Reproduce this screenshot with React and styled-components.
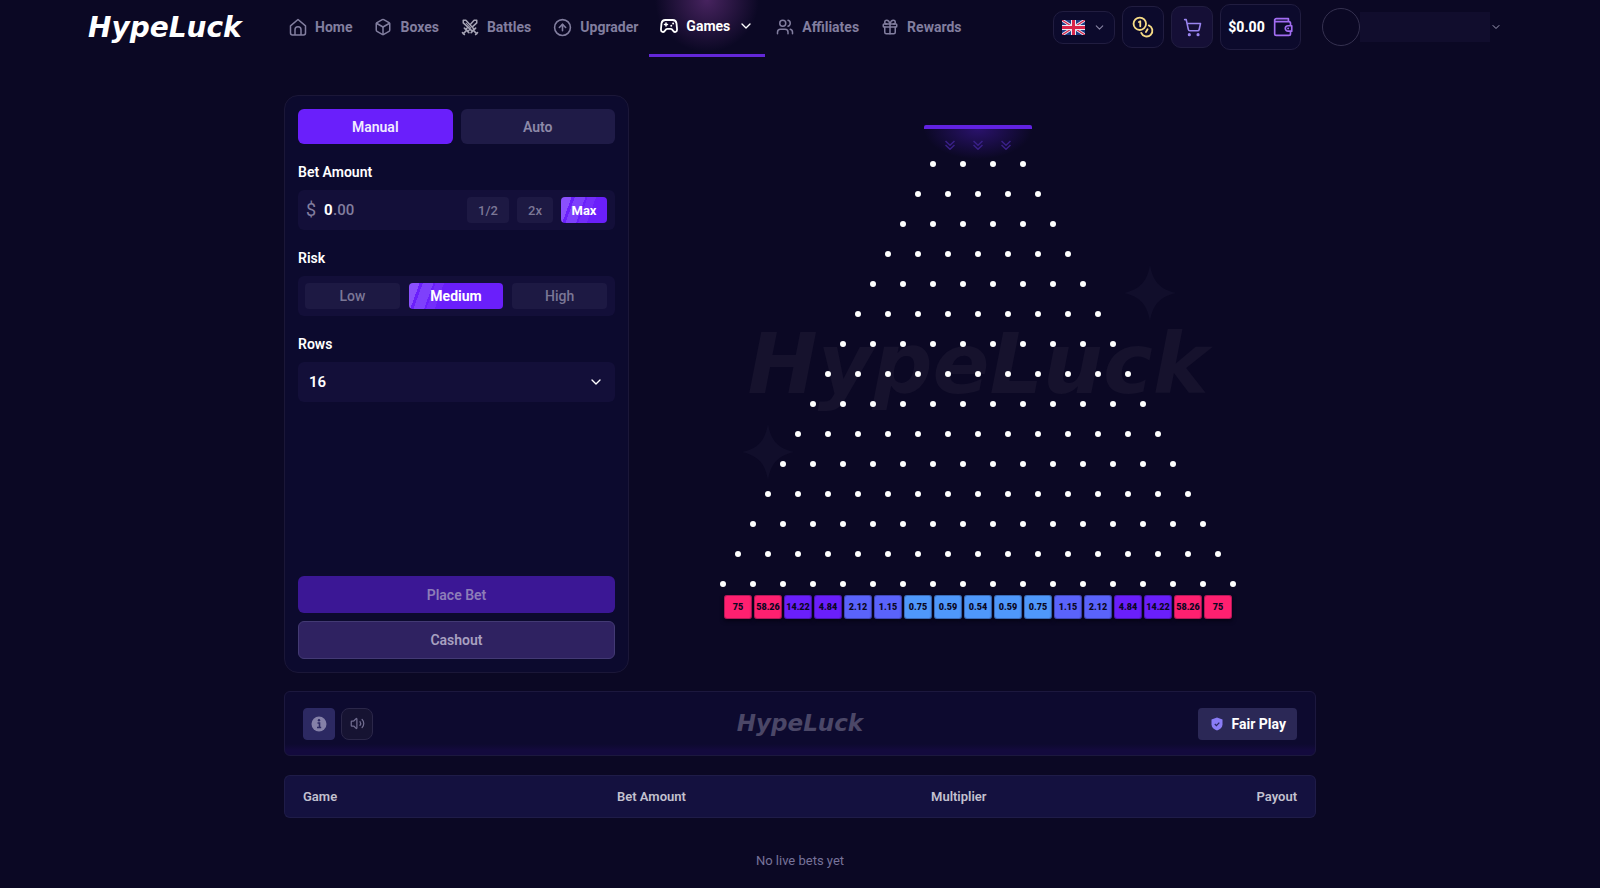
/* eslint-disable react/prop-types */
import { useState } from "react";
import styled, { createGlobalStyle, css } from "styled-components";
import {
  Box,
  ChevronDown,
  CircleArrowUp,
  Gift,
  ShoppingCart,
  Users,
  Volume2,
} from "lucide-react";

const GlobalStyle = createGlobalStyle`
  * {
    box-sizing: border-box;
  }
  body {
    margin: 0;
    min-height: 100vh;
    background-color: #0b0824;
    color: #ffffff;
    font-family: Roboto, "Noto Sans", sans-serif;
    font-size: 14px;
    line-height: 20px;
  }
  button, input, select {
    font-family: inherit;
  }
  button {
    padding: 0;
    border: none;
    cursor: pointer;
  }
`;

const ROWS = Array.from({ length: 15 }, (_, i) => i + 4);

const MULTIPLIERS = [
  { value: "75", tone: "pink" },
  { value: "58.26", tone: "pink" },
  { value: "14.22", tone: "violet" },
  { value: "4.84", tone: "violet" },
  { value: "2.12", tone: "indigo" },
  { value: "1.15", tone: "indigo" },
  { value: "0.75", tone: "blue" },
  { value: "0.59", tone: "blue" },
  { value: "0.54", tone: "blue" },
  { value: "0.59", tone: "blue" },
  { value: "0.75", tone: "blue" },
  { value: "1.15", tone: "indigo" },
  { value: "2.12", tone: "indigo" },
  { value: "4.84", tone: "violet" },
  { value: "14.22", tone: "violet" },
  { value: "58.26", tone: "pink" },
  { value: "75", tone: "pink" },
];

const TONES = {
  pink: "#ff2070",
  violet: "#6a1ffb",
  indigo: "#5a63fb",
  blue: "#4f98fb",
};

/* icons */

const HomeIcon = () => (
  <svg width="18" height="18" viewBox="0 0 24 24" fill="none" stroke="currentColor" strokeWidth="2" strokeLinejoin="round">
    <path d="M2 10.5 12 2l10 8.500V20a2.500 2.500 0 0 1-2.500 2.500h-15A2.500 2.500 0 0 1 2 20z" />
    <path d="M8 22.500v-7a4 4 0 0 1 8 0v7" />
  </svg>
);

const SwordsIcon = () => (
  <svg width="18" height="18" viewBox="0 0 24 24" fill="none" stroke="#a5a3b4" strokeLinecap="round" strokeLinejoin="round">
    <path d="M3 3h3.500l11 12-2.500 2.500L3 6.500zM21 3h-3.500L13 8M11 16l-2 1.500L6.500 15l2-2M21 3v3.500l-5.500 5" strokeWidth="2" />
    <path d="m7 7 6 6.500" strokeWidth="1.400" />
    <path d="m13.500 19.500 6-6M10.500 19.500l-6-6" strokeWidth="2.200" />
    <path d="m17.500 17.500 3.500 3.500M6.500 17.500 3 21M22 19.500 19.500 22M2 19.500 4.500 22" strokeWidth="2.200" />
  </svg>
);

const GamepadIcon = () => (
  <svg width="18" height="18" viewBox="0 0 24 24" fill="none" stroke="currentColor" strokeWidth="2.400" strokeLinecap="round" strokeLinejoin="round">
    <path d="M7 4h10c3 0 4.500 1.500 5 4.500l.7 7.500c.3 4-2.700 5-4.700 3l-2-2.500c-.5-.6-1-.8-1.800-.8H9.800c-.8 0-1.300.2-1.800.8L6 19c-2 2-5 1-4.700-3L2 8.500C2.500 5.500 4 4 7 4z" />
    <path d="M6 10h4M8 8v4" strokeWidth="2" />
    <path d="M17.500 8.500v.1M15 11.500v.1" strokeWidth="2.600" />
  </svg>
);

const CoinsIcon = () => (
  <svg width="22" height="22" viewBox="0 0 24 24" fill="none" stroke="#f7dc86" strokeWidth="2" strokeLinecap="round" strokeLinejoin="round">
    <circle cx="8.500" cy="8.500" r="6.800" />
    <path d="M7.500 6.500 9 5.800v5.400" />
    <path d="M18.300 10.200a6.300 6.300 0 1 1-8.200 8.200" />
    <path d="m17 14.500-1.800 3" />
  </svg>
);

const WalletIcon = () => (
  <svg width="20" height="20" viewBox="0 0 24 24" fill="none" stroke="#a26df2" strokeWidth="2" strokeLinejoin="round">
    <path d="M21 10.500V7.500a2 2 0 0 0-2-2H4a2 2 0 0 1-2-2V20a2 2 0 0 0 2 2h15a2 2 0 0 0 2-2v-3" />
    <path d="M2 3.700C2 2.700 2.800 2 4 2h14.500v3.500" />
    <path d="M22.500 10.500H18a3.200 3.200 0 0 0 0 6.500h4.500z" />
    <path d="M18 13.700h.3" strokeLinecap="round" />
  </svg>
);

const FlagIcon = () => (
  <svg width="23" height="15" viewBox="0 0 46 30">
    <rect width="46" height="30" fill="#1d3c85" />
    <path d="M0 0 46 30M46 0 0 30" stroke="#e9e9f2" strokeWidth="6" />
    <path d="M0 0 46 30M46 0 0 30" stroke="#d8254a" strokeWidth="2.400" />
    <path d="M23 0v30M0 15h46" stroke="#e9e9f2" strokeWidth="10" />
    <path d="M23 0v30M0 15h46" stroke="#d8254a" strokeWidth="6" />
  </svg>
);

const InfoIcon = () => (
  <svg width="16" height="16" viewBox="0 0 16 16">
    <circle cx="8" cy="8" r="7.500" fill="#8581a8" />
    <path d="M6.500 7h2v4.200M6 11.500h4.200" stroke="#2c2962" strokeWidth="1.600" fill="none" />
    <circle cx="8" cy="4.300" r="1.200" fill="#2c2962" />
  </svg>
);

const ShieldIcon = () => (
  <svg width="12" height="14" viewBox="0 0 12 14">
    <path d="M6 .5 11.500 2.500v5C11.500 10.500 9 12.500 6 13.500 3 12.500.5 10.500.5 7.500v-5z" fill="#8a7cf5" />
    <path d="m3.800 7 1.600 1.600L8.300 5.600" fill="none" stroke="#2c2962" strokeWidth="1.300" />
  </svg>
);

const DropIcon = () => (
  <svg width="10" height="10" viewBox="0 0 10 10" fill="none" stroke="currentColor" strokeWidth="1.500">
    <path d="m.5 1 4.500 4.200L9.500 1M.5 5 5 9.200 9.500 5" />
  </svg>
);

const StarIcon = ({ className }) => (
  <svg className={className} width="52" height="56" viewBox="0 0 52 56">
    <path d="M26 0C29 16 35 24 52 28 35 32 29 40 26 56 23 40 17 32 0 28 17 24 23 16 26 0z" fill="#110e2b" />
  </svg>
);

/* header */

const Wordmark = styled.span`
  font-family: "DejaVu Sans", sans-serif;
  font-size: ${({ $size }) => $size}px;
  line-height: ${({ $size }) => $size}px;
  font-weight: bold;
  font-style: italic;
  white-space: nowrap;
  color: ${({ $color }) => $color};
`;

const HeaderBar = styled.header`
  display: flex;
  align-items: center;
  max-width: 1424px;
  height: 57px;
  margin: 0 auto;
`;

const LogoLink = styled.a`
  display: flex;
  width: 190px;
  margin-top: -2px;
  text-decoration: none;
`;

const Nav = styled.nav`
  display: flex;
  align-self: stretch;
`;

const NavLink = styled.a`
  display: flex;
  align-items: center;
  gap: 8px;
  padding: 0 11px 3px;
  font-size: 14px;
  font-weight: bold;
  text-decoration: none;
  color: #827e9f;

  ${({ $active }) =>
    $active &&
    css`
      border-bottom: 3px solid #6327d8;
      background: radial-gradient(circle 52px at 50% 0, #47235f, rgba(71, 35, 95, 0));
      color: #ffffff;
    `}
`;

const HeaderActions = styled.div`
  display: flex;
  align-items: center;
  gap: 7px;
  margin-left: auto;
  padding-right: 10px;
  margin-top: -3px;
`;

const ActionButton = styled.button`
  display: flex;
  align-items: center;
  justify-content: center;
  gap: 8px;
  width: ${({ $width }) => $width}px;
  height: ${({ $height }) => $height}px;
  border: 1px solid #211d40;
  border-radius: 10px;
  background-color: ${({ $bg }) => $bg || "#0c0a2c"};
  font-size: 14px;
  font-weight: 800;
  color: #ffffff;
`;

const Profile = styled.button`
  display: flex;
  align-items: center;
  margin-left: 14px;
  background: none;
  color: #a09db8;
`;

const Avatar = styled.span`
  width: 38px;
  height: 38px;
  border: 1px solid #353150;
  border-radius: 50%;
`;

const ProfileName = styled.span`
  width: 130px;
  height: 30px;
  background-color: #110d2d;
`;

/* bet panel */

const Main = styled.main`
  max-width: 1032px;
  margin: 0 auto;
  padding-top: 38px;
`;

const Game = styled.section`
  display: grid;
  grid-template-columns: 345px 1fr;
  gap: 11px;
`;

const Panel = styled.form`
  display: flex;
  flex-direction: column;
  min-height: 578px;
  padding: 13px;
  border: 1px solid #1b1738;
  border-radius: 14px;
  background-color: #0c0a2e;
`;

const Tabs = styled.div`
  display: grid;
  grid-template-columns: 1fr 1fr;
  gap: 8px;
`;

const Tab = styled.button`
  height: 35px;
  border-radius: 6px;
  background-color: ${({ $active }) => ($active ? "#6a1ffb" : "#1f1b47")};
  font-size: 14px;
  font-weight: 600;
  color: ${({ $active }) => ($active ? "#f2ecff" : "#8d89a8")};
`;

const Field = styled.div`
  display: flex;
  flex-direction: column;
  gap: 8px;
  margin-top: 18px;
`;

const labelStyle = css`
  font-size: 14px;
  line-height: 20px;
  font-weight: 600;
  color: #ffffff;
`;

const Label = styled.label`
  ${labelStyle}
`;

const GroupTitle = styled.span`
  ${labelStyle}
`;

const FieldBox = styled.div`
  display: flex;
  align-items: center;
  gap: ${({ $gap }) => $gap || 0}px;
  height: 40px;
  padding: 0 8px 0 7px;
  border-radius: 6px;
  background-color: #130f39;
`;

const Currency = styled.span`
  width: 12px;
  margin-right: 7px;
  font-size: 18px;
  text-align: center;
  color: #827e9f;
`;

const Amount = styled.div`
  display: flex;
  flex: 1;
  font-size: 15px;
  font-weight: 500;
  color: #827e9f;

  & input {
    width: 9px;
    padding: 0;
    border: none;
    outline: none;
    background: none;
    font-size: 15px;
    font-weight: bold;
    color: #ffffff;
  }
`;

const QuickButtons = styled.div`
  display: flex;
  gap: 8px;
`;

const Chip = styled.button`
  flex: ${({ $width }) => ($width ? "none" : 1)};
  width: ${({ $width }) => ($width ? `${$width}px` : "auto")};
  height: 26px;
  border-radius: 4px;
  background-color: #1d1943;
  font-size: ${({ $size }) => $size || 14}px;
  font-weight: 500;
  color: #7b7796;

  ${({ $active }) =>
    $active &&
    css`
      background: linear-gradient(
        110deg,
        #8a50fc 0 10px,
        #6a1ffb 10px 13px,
        #7e40fc 13px 23px,
        #6a1ffb 23px 25px,
        #742dfb 25px 33px,
        #6a1ffb 33px
      );
      font-weight: bold;
      color: #ffffff;
    `}
`;

const SelectBox = styled.div`
  display: grid;
  align-items: center;
  height: 40px;
  border-radius: 6px;
  background-color: #130f39;

  & > * {
    grid-area: 1 / 1;
  }
  & select {
    width: 100%;
    height: 40px;
    padding: 0 11px;
    border: none;
    appearance: none;
    background: none;
    font-size: 15px;
    font-weight: 600;
    color: #ffffff;
  }
  & svg {
    justify-self: end;
    margin-right: 11px;
    pointer-events: none;
  }
`;

const PanelFooter = styled.div`
  display: grid;
  gap: 8px;
  margin-top: auto;
`;

const BetButton = styled.button`
  height: ${({ $outlined }) => ($outlined ? 38 : 37)}px;
  border: ${({ $outlined }) => ($outlined ? "1px solid #433a74" : "none")};
  border-radius: 6px;
  background-color: ${({ $outlined }) => ($outlined ? "#2f2261" : "#3b1795")};
  font-size: 14px;
  font-weight: 600;
  color: ${({ $outlined }) => ($outlined ? "#a8a0c0" : "#8d7db8")};
`;

/* plinko board */

const BoardArea = styled.div`
  position: relative;
  display: flex;
  flex-direction: column;
  align-items: center;
  padding-top: 30px;
`;

const Watermark = styled.div`
  position: absolute;
  inset: 0;
  display: flex;
  align-items: center;
  justify-content: center;
  padding-bottom: 40px;
`;

const WatermarkInner = styled.div`
  position: relative;
  display: flex;
`;

const TopStar = styled(StarIcon)`
  position: absolute;
  top: -57px;
  right: 33px;
`;

const BottomStar = styled(StarIcon)`
  position: absolute;
  top: 102px;
  left: -5px;
`;

const Dropper = styled.div`
  position: relative;
  display: flex;
  justify-content: space-between;
  align-items: center;
  width: 108px;
  height: 36px;
  padding: 0 21px;
  border-top: 4px solid #6122e2;
  border-radius: 2px;
  background: radial-gradient(ellipse 54px 30px at 50% 0, #2a126c, rgba(42, 18, 108, 0));
  color: #3a2088;
`;

const Pegs = styled.div`
  position: relative;
  display: grid;
  gap: 24px;
`;

const PegRow = styled.div`
  display: flex;
  justify-content: center;
  gap: 24px;
`;

const Peg = styled.span`
  width: 6px;
  height: 6px;
  border-radius: 50%;
  background-color: #ffffff;
`;

const Slots = styled.div`
  position: relative;
  display: flex;
  gap: 2px;
  margin-top: 8px;
`;

const Slot = styled.span`
  width: 28px;
  height: 24px;
  border-radius: 3px;
  background-color: ${({ $tone }) => TONES[$tone]};
  box-shadow: inset 0 0 0 1px rgba(10, 7, 34, 0.3), 0 2px 4px #050314;
  font-size: 9px;
  line-height: 24px;
  font-weight: 900;
  text-align: center;
  color: #0a0722;
`;

/* toolbar and bets */

const Toolbar = styled.section`
  display: grid;
  grid-template-columns: 1fr auto 1fr;
  align-items: center;
  height: 65px;
  margin-top: 18px;
  padding: 0 18px;
  border: 1px solid #1c183e;
  border-radius: 6px;
  background: linear-gradient(#0d0a2f 0, #0d0a2f 52px, #130a3d 58px, #130a3d);
`;

const ToolButtons = styled.div`
  display: flex;
  gap: 6px;
`;

const ToolButton = styled.button`
  display: flex;
  align-items: center;
  justify-content: center;
  width: 32px;
  height: 32px;
  border: 1px solid ${({ $filled }) => ($filled ? "#2c2962" : "#2b2749")};
  border-radius: ${({ $filled }) => ($filled ? 4 : 8)}px;
  background-color: ${({ $filled }) => ($filled ? "#2c2962" : "#161332")};
  color: #716d90;
`;

const FairPlay = styled.button`
  display: flex;
  align-items: center;
  justify-self: end;
  gap: 9px;
  height: 32px;
  padding: 0 11px 0 13px;
  border-radius: 4px;
  background-color: #2b2856;
  font-size: 14px;
  font-weight: bold;
  color: #ffffff;
`;

const BetsTable = styled.table`
  width: 100%;
  margin-top: 19px;
  border-spacing: 0;
  table-layout: fixed;

  & th {
    height: 43px;
    padding: 0;
    border: solid #1f1c48;
    border-width: 1px 0;
    background-color: #14113f;
    font-size: 13px;
    font-weight: 600;
    text-align: left;
    color: #c3c1cf;
  }
  & th:first-child {
    width: 333px;
    padding-left: 18px;
    border-left-width: 1px;
    border-radius: 6px 0 0 6px;
  }
  & th:last-child {
    padding-right: 18px;
    border-right-width: 1px;
    border-radius: 0 6px 6px 0;
    text-align: right;
  }
  & th:nth-child(2),
  & th:nth-child(3) {
    width: 314px;
  }
  & td {
    padding: 33px 0 16px;
    font-size: 13px;
    text-align: center;
    color: #77739a;
  }
`;

const NAV_ITEMS = [
  { label: "Home", icon: <HomeIcon /> },
  { label: "Boxes", icon: <Box size={18} /> },
  { label: "Battles", icon: <SwordsIcon /> },
  { label: "Upgrader", icon: <CircleArrowUp size={19} /> },
  { label: "Games", icon: <GamepadIcon />, active: true },
  { label: "Affiliates", icon: <Users size={18} /> },
  { label: "Rewards", icon: <Gift size={18} /> },
];

const Header = () => (
  <HeaderBar>
    <LogoLink href="#">
      <Wordmark $size={28} $color="#ffffff">HypeLuck</Wordmark>
    </LogoLink>
    <Nav>
      {NAV_ITEMS.map(({ label, icon, active }) => (
        <NavLink key={label} href="#" $active={active}>
          {icon}
          {label}
          {active && <ChevronDown size={16} />}
        </NavLink>
      ))}
    </Nav>
    <HeaderActions>
      <ActionButton $width={62} $height={33} aria-label="Language">
        <FlagIcon />
        <ChevronDown size={13} color="#8784a3" />
      </ActionButton>
      <ActionButton $width={42} $height={42} aria-label="Coins">
        <CoinsIcon />
      </ActionButton>
      <ActionButton $width={42} $height={42} $bg="#150f36" aria-label="Cart">
        <ShoppingCart size={19} color="#9a85f0" />
      </ActionButton>
      <ActionButton $width={81} $height={46}>
        $0.00
        <WalletIcon />
      </ActionButton>
      <Profile aria-label="Profile">
        <Avatar />
        <ProfileName />
        <ChevronDown size={12} />
      </Profile>
    </HeaderActions>
  </HeaderBar>
);

const BetPanel = () => {
  const [mode, setMode] = useState("Manual");
  const [risk, setRisk] = useState("Medium");
  const [amount, setAmount] = useState("0");

  return (
    <Panel onSubmit={(e) => e.preventDefault()}>
      <Tabs>
        {["Manual", "Auto"].map((item) => (
          <Tab key={item} type="button" $active={mode === item} onClick={() => setMode(item)}>
            {item}
          </Tab>
        ))}
      </Tabs>
      <Field>
        <Label htmlFor="amount">Bet Amount</Label>
        <FieldBox>
          <Currency>$</Currency>
          <Amount>
            <input id="amount" value={amount} onChange={(e) => setAmount(e.target.value)} />
            .00
          </Amount>
          <QuickButtons>
            <Chip type="button" $width={42} $size={13}>1/2</Chip>
            <Chip type="button" $width={36} $size={13}>2x</Chip>
            <Chip type="button" $width={46} $size={13} $active>Max</Chip>
          </QuickButtons>
        </FieldBox>
      </Field>
      <Field>
        <GroupTitle>Risk</GroupTitle>
        <FieldBox $gap={9}>
          {["Low", "Medium", "High"].map((item) => (
            <Chip key={item} type="button" $active={risk === item} onClick={() => setRisk(item)}>
              {item}
            </Chip>
          ))}
        </FieldBox>
      </Field>
      <Field>
        <Label htmlFor="rows">Rows</Label>
        <SelectBox>
          <select id="rows" defaultValue="16">
            <option>8</option>
            <option>12</option>
            <option>16</option>
          </select>
          <ChevronDown size={16} />
        </SelectBox>
      </Field>
      <PanelFooter>
        <BetButton type="submit">Place Bet</BetButton>
        <BetButton type="button" $outlined>Cashout</BetButton>
      </PanelFooter>
    </Panel>
  );
};

const Board = () => (
  <BoardArea>
    <Watermark aria-hidden="true">
      <WatermarkInner>
        <TopStar />
        <Wordmark $size={84} $color="#16122d">HypeLuck</Wordmark>
        <BottomStar />
      </WatermarkInner>
    </Watermark>
    <Dropper>
      <DropIcon />
      <DropIcon />
      <DropIcon />
    </Dropper>
    <Pegs>
      {ROWS.map((count) => (
        <PegRow key={count}>
          {Array.from({ length: count }, (_, i) => (
            <Peg key={i} />
          ))}
        </PegRow>
      ))}
    </Pegs>
    <Slots>
      {MULTIPLIERS.map(({ value, tone }, i) => (
        <Slot key={i} $tone={tone}>{value}</Slot>
      ))}
    </Slots>
  </BoardArea>
);

const App = () => (
  <>
    <GlobalStyle />
    <Header />
    <Main>
      <Game>
        <BetPanel />
        <Board />
      </Game>
      <Toolbar>
        <ToolButtons>
          <ToolButton $filled aria-label="Info">
            <InfoIcon />
          </ToolButton>
          <ToolButton aria-label="Sound">
            <Volume2 size={15} />
          </ToolButton>
        </ToolButtons>
        <Wordmark $size={23} $color="#4b4767">HypeLuck</Wordmark>
        <FairPlay>
          <ShieldIcon />
          Fair Play
        </FairPlay>
      </Toolbar>
      <BetsTable>
        <thead>
          <tr>
            <th>Game</th>
            <th>Bet Amount</th>
            <th>Multiplier</th>
            <th>Payout</th>
          </tr>
        </thead>
        <tbody>
          <tr>
            <td colSpan={4}>No live bets yet</td>
          </tr>
        </tbody>
      </BetsTable>
    </Main>
  </>
);

export default App;
